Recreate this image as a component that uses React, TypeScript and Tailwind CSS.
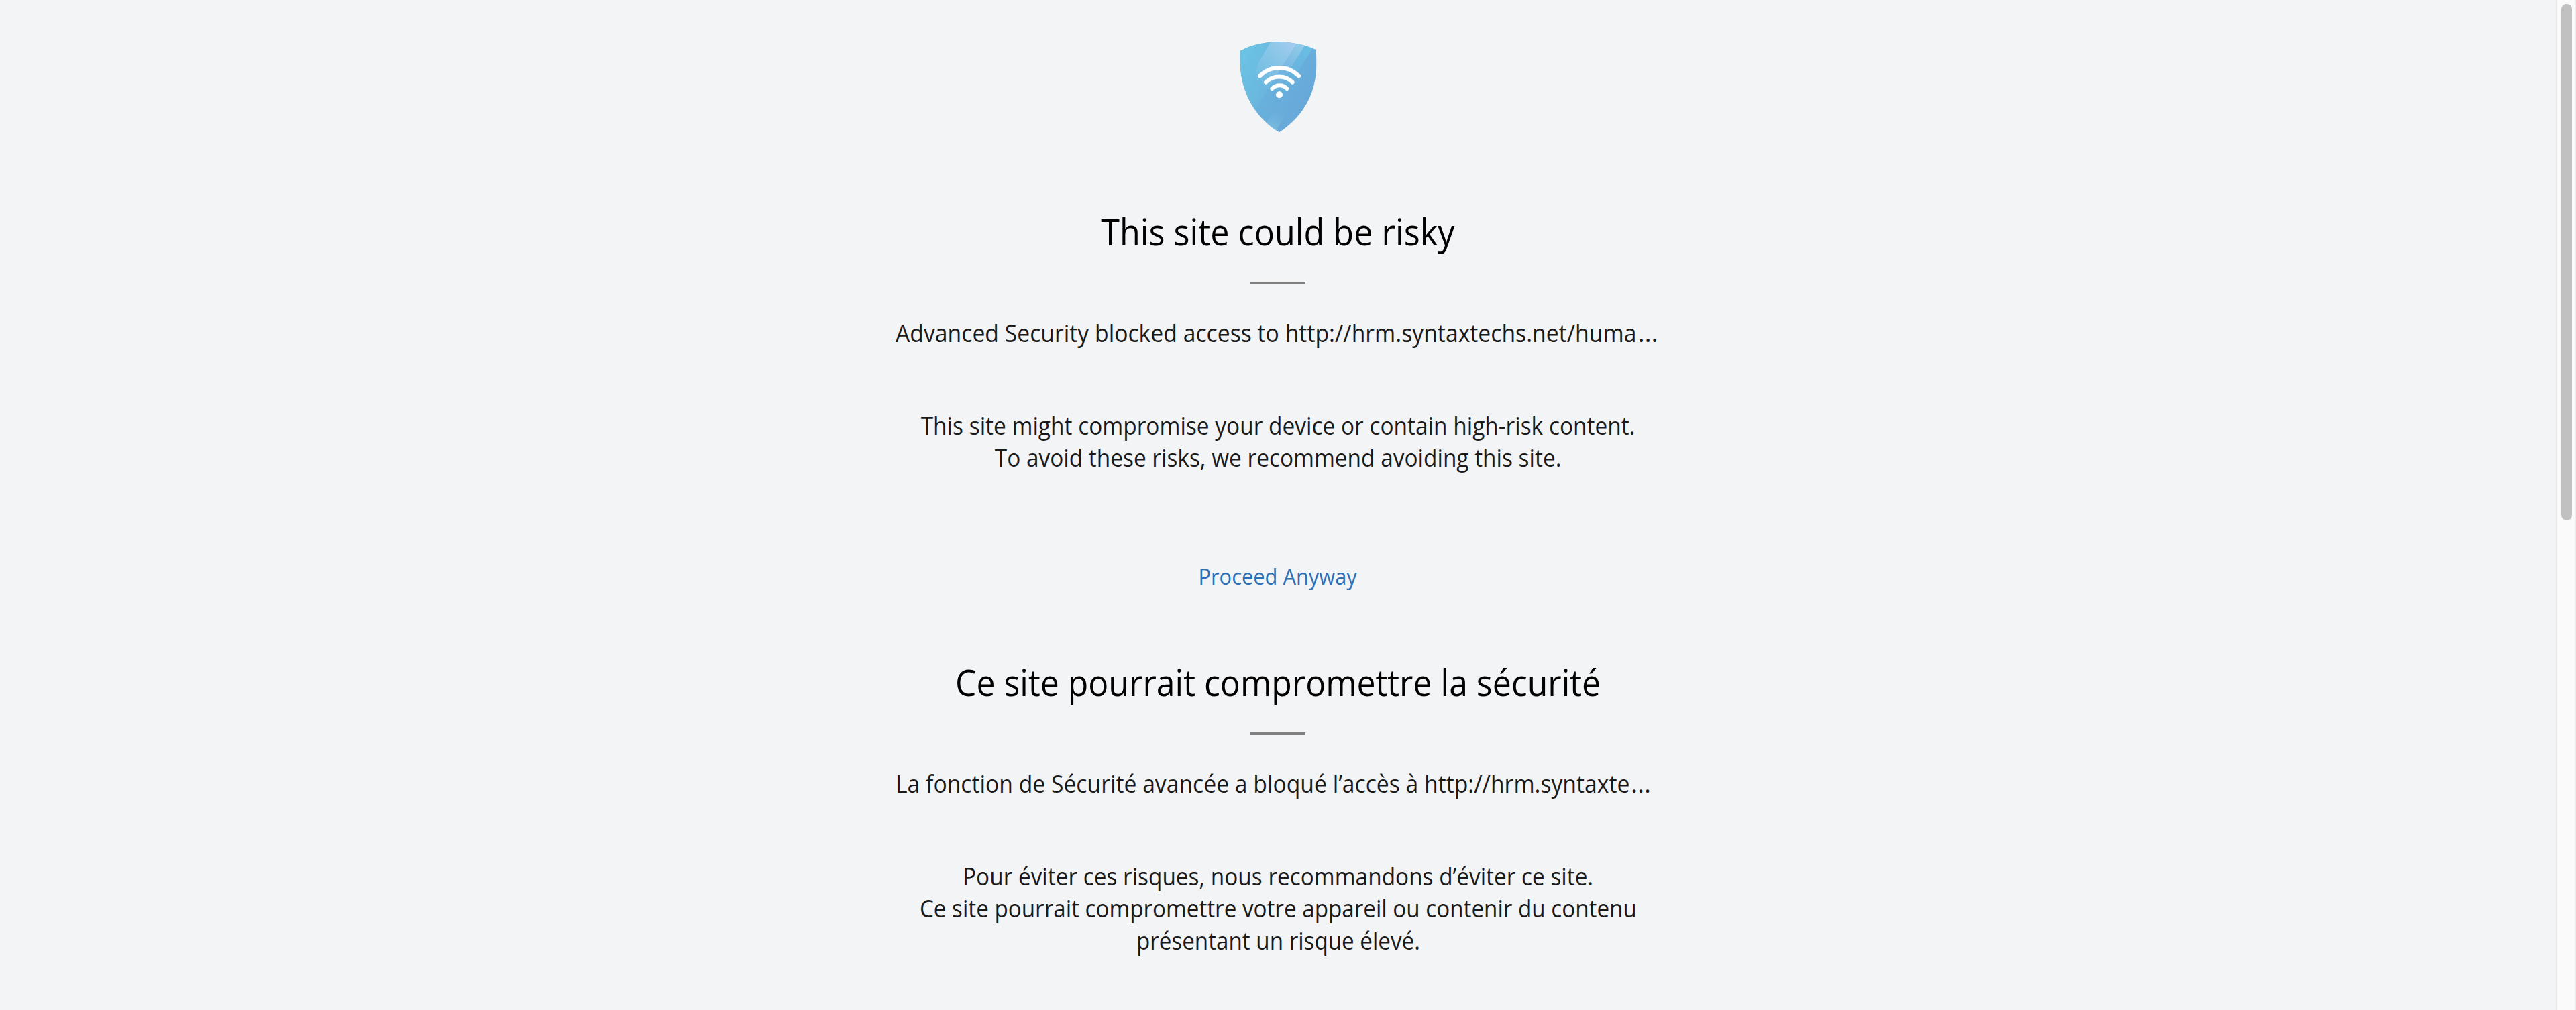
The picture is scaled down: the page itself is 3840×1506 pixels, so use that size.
import type { ReactNode } from "react";

function Shield() {
  return (
    <svg viewBox="0 0 510 540" className="block h-[180px] w-[170px]" fill="none">
      <defs>
        <linearGradient id="base" gradientUnits="userSpaceOnUse" x1="180" y1="270" x2="400" y2="400">
          <stop offset="0" stopColor="#68b3de" />
          <stop offset="1" stopColor="#68a6d7" />
        </linearGradient>
        <linearGradient id="left" gradientUnits="userSpaceOnUse" x1="90" y1="150" x2="230" y2="215">
          <stop offset="0" stopColor="#6bc3e3" />
          <stop offset="1" stopColor="#6ab6de" />
        </linearGradient>
        <linearGradient id="beam" gradientUnits="userSpaceOnUse" x1="160" y1="240" x2="325" y2="90">
          <stop offset="0" stopColor="#9dcbed" stopOpacity="0" />
          <stop offset="0.6" stopColor="#93cae9" stopOpacity="0.75" />
          <stop offset="1" stopColor="#a0cbee" />
        </linearGradient>
        <linearGradient id="strip" gradientUnits="userSpaceOnUse" x1="365" y1="80" x2="270" y2="225">
          <stop offset="0" stopColor="#91cbe8" />
          <stop offset="1" stopColor="#6fb1df" />
        </linearGradient>
        <linearGradient id="strip2" gradientUnits="userSpaceOnUse" x1="385" y1="100" x2="230" y2="320">
          <stop offset="0" stopColor="#69bde4" />
          <stop offset="1" stopColor="#69b3de" stopOpacity="0" />
        </linearGradient>
        <linearGradient id="foot" gradientUnits="userSpaceOnUse" x1="220" y1="450" x2="265" y2="355">
          <stop offset="0" stopColor="#78bbe0" />
          <stop offset="1" stopColor="#6aaedb" stopOpacity="0" />
        </linearGradient>
        <clipPath id="shape">
          <path d="M86 107Q165 67 258 67Q350 69 425 102C430 180 429 240 398 314C368 382 321 431 261 472C202 435 156 388 126 326C92 256 83 200 86 107Z" />
        </clipPath>
      </defs>
      <g clipPath="url(#shape)">
        <path d="M60 40H460V500H60Z" fill="url(#base)" />
        <path d="M60 40H362L144 382L60 500Z" fill="url(#left)" />
        <path d="M239 40H362L144 382L130 350L165 165Z" fill="url(#beam)" />
        <path d="M362 40H404L270 250L228 250Z" fill="url(#strip)" />
        <path d="M404 40H448L260 330H218Z" fill="url(#strip2)" />
        <path d="M200 434L252 350L285 400L245 465L262 480Z" fill="url(#foot)" />
      </g>
      <g stroke="#fff" strokeWidth="18" strokeLinecap="round">
        <path d="M174 220A121 121 0 0 1 348 220" />
        <path d="M201 248A84 84 0 0 1 320 248" />
        <path d="M229 276A46 46 0 0 1 295 276" />
      </g>
      <circle cx="261" cy="304" r="15" fill="#fff" />
    </svg>
  );
}

function Title({ className, children }: { className: string; children: ReactNode }) {
  return (
    <>
      <h1 className="flex justify-center text-[54px] leading-[72px] whitespace-nowrap text-black">
        <span className={className}>{children}</span>
      </h1>
      <div className="mx-auto mt-[39px] h-1 w-[82px] bg-[#808080]" />
    </>
  );
}

function Blocked({ className, children }: { className: string; children: ReactNode }) {
  return (
    <p className="mx-auto mt-[49px] w-[1140px] text-4xl leading-[48px] whitespace-nowrap">
      <span className={className}>
        {children}
        <span className="ml-0.5 inline-block origin-left scale-x-[1.15]">…</span>
      </span>
    </p>
  );
}

function Line({ className, children }: { className: string; children: ReactNode }) {
  return (
    <p className="flex justify-center text-4xl leading-[48px] whitespace-nowrap">
      <span className={className}>{children}</span>
    </p>
  );
}

export default function App() {
  return (
    <div className="flex h-[1506px] overflow-hidden bg-[#f3f4f6] font-['Open_Sans',sans-serif] text-[#1a1a1a]">
      <main className="w-[3810px] shrink-0 pt-10">
        <div className="ml-[1820px]">
          <Shield />
        </div>

        <section className="mt-[89px]">
          <Title className="inline-block scale-x-[.932]">This site could be risky</Title>
          <Blocked className="inline-block origin-left scale-x-[.937]">
            Advanced Security blocked access to http://hrm.syntaxtechs.net/huma
          </Blocked>
          <div className="mt-[90px]">
            <Line className="inline-block scale-x-[.929]">
              This site might compromise your device or contain high-risk content.
            </Line>
            <Line className="inline-block scale-x-[.928]">
              To avoid these risks, we recommend avoiding this site.
            </Line>
          </div>
          <div className="mt-[129px] flex justify-center text-[32px] leading-[48px] text-[#2b70b7]">
            <a className="inline-block scale-x-[.964]">Proceed Anyway</a>
          </div>
        </section>

        <section className="mt-[97px]">
          <Title className="inline-block scale-x-[.925]">Ce site pourrait compromettre la sécurité</Title>
          <Blocked className="inline-block origin-left scale-x-[.936]">
            La fonction de Sécurité avancée a bloqué l’accès à http://hrm.syntaxte
          </Blocked>
          <div className="mt-[90px]">
            <Line className="inline-block scale-x-[.927]">
              Pour éviter ces risques, nous recommandons d’éviter ce site.
            </Line>
            <Line className="inline-block scale-x-[.9225]">
              Ce site pourrait compromettre votre appareil ou contenir du contenu
            </Line>
            <Line className="inline-block scale-x-[.922]">présentant un risque élevé.</Line>
          </div>
        </section>
      </main>

      <div className="h-full w-[30px] shrink-0 border-x-2 border-[#e8e8e8] border-r-[#ededed] bg-[#fafafa] pt-1.5 pl-1.5">
        <div className="h-[770px] w-4 rounded-full bg-[#c1c1c1]" />
      </div>
    </div>
  );
}
